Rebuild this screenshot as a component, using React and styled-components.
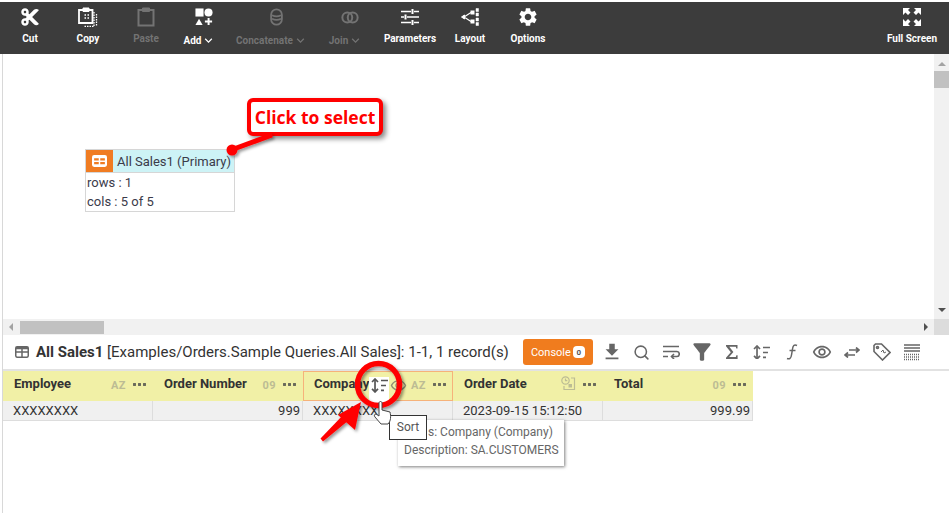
import React from 'react'
import styled, { createGlobalStyle } from 'styled-components'
import { MdSettings, MdFileDownload, MdFilterAlt, MdOutlineRemoveRedEye, MdKeyboardArrowDown } from 'react-icons/md'
import { FaCut } from 'react-icons/fa'
import { LuSearch } from 'react-icons/lu'

const Global = createGlobalStyle`
  html, body { margin: 0; padding: 0; background: #fff; }
  body { font-family: Roboto, "Liberation Sans", sans-serif; color: #333; }
`

const CopyIcon = () => (
  <svg width="20" height="20" viewBox="0 0 20 20" fill="none" stroke="currentColor">
    <path d="M5 3H1v13h13.500V3H11" strokeWidth="1.800" />
    <path d="M5 1h6v3.500H5z" fill="currentColor" strokeWidth="1" />
    <path d="M6.500 8h1.500M9.500 8h1.500M6.500 11h1.500M9.500 11h1.500" strokeWidth="1.500" />
    <path d="M16 5v14.500H6M18.500 7v12" strokeWidth="1.300" strokeDasharray="1.500 1" />
  </svg>
)
const PasteIcon = () => (
  <svg width="18" height="20" viewBox="0 0 18 20" fill="none" stroke="currentColor">
    <path d="M5 3H1.500v15.500h15V3H13" strokeWidth="2" />
    <path d="M5.500 1h7v3.500h-7z" fill="currentColor" strokeWidth="1" />
  </svg>
)
const AddIcon = () => (
  <svg width="18" height="18" viewBox="0 0 20 20" fill="currentColor">
    <rect x="0.500" y="0.500" width="9" height="9" />
    <circle cx="15" cy="5" r="4.500" />
    <path d="M0.500 19l4-7 4 7z" />
    <path d="M14 11h2.200v2.800H19v2.200h-2.800v3H14v-3h-3v-2.200h3z" />
  </svg>
)
const ConcatIcon = () => (
  <svg width="13" height="18" viewBox="0 0 14 20" fill="none" stroke="currentColor" strokeWidth="2">
    <rect x="1" y="1.500" width="12" height="17" rx="6" />
    <path d="M2 8c3 1.500 7 1.500 10 0M2 12c3 1.500 7 1.500 10 0" />
  </svg>
)
const JoinIcon = () => (
  <svg width="18" height="13" viewBox="0 0 20 14" fill="none" stroke="currentColor" strokeWidth="2.200">
    <circle cx="7" cy="7" r="5.500" />
    <circle cx="13" cy="7" r="5.500" />
  </svg>
)
const ParamsIcon = () => (
  <svg width="18" height="16" viewBox="0 0 18 16" fill="none" stroke="currentColor" strokeWidth="1.500">
    <path d="M0 2.500h10M13 2.500h5M0 8h3M6 8h12M0 13.500h10M13 13.500h5" />
    <path d="M11.500 0v5M4.500 5.500v5M11.500 11v5" strokeWidth="2" />
  </svg>
)
const LayoutIcon = () => (
  <svg width="18" height="18" viewBox="0 0 18 18" fill="currentColor" stroke="currentColor">
    <path d="M3 9L10 4.500M3 9l7 4.500" fill="none" strokeWidth="1.200" />
    <path d="M0.500 9l3-2v4z" />
    <rect x="10" y="3" width="3" height="3" />
    <rect x="10" y="12" width="3" height="3" />
    <path d="M15 0.500h2.500v3H15zM15 5h2.500v3H15zM15 10h2.500v3H15zM15 14.500h2.500v3H15z" strokeWidth="0.500" />
  </svg>
)
const FullIcon = () => (
  <svg width="18" height="18" viewBox="0 0 18 18" fill="currentColor">
    <path d="M0 0h7L5 2l2.500 2.500-2.500 2.500L2.500 4.500 0 7z" />
    <path d="M18 0h-7l2 2-2.500 2.500 2.500 2.500 2.500-2.500L18 7z" />
    <path d="M0 18h7l-2-2 2.500-2.500L5 11l-2.500 2.500L0 11z" />
    <path d="M18 18h-7l2-2-2.500-2.500L13 11l2.500 2.500L18 11z" />
  </svg>
)
const GridIcon = ({ size = 14 }) => (
  <svg width={size} height={size * 0.86} viewBox="0 0 14 12" fill="none" stroke="currentColor" strokeWidth="1.500">
    <rect x="0.750" y="0.750" width="12.500" height="10.500" rx="1.500" />
    <path d="M0.750 6h12.500M7 0.750v10.500" />
    <path d="M0.750 0.750h12.500v2.500H0.750z" fill="currentColor" stroke="none" />
  </svg>
)
const NodeGrid = () => (
  <svg width="15" height="12" viewBox="0 0 14 11">
    <rect width="14" height="11" rx="2" fill="#fff" />
    <path d="M2 3h4.300v2H2zM7.700 3H12v2H7.700zM2 6.500h4.300v2H2zM7.700 6.500H12v2H7.700z" fill="#f07c22" />
  </svg>
)
const WrapIcon = () => (
  <svg width="17" height="14" viewBox="0 0 17 14" fill="none" stroke="currentColor" strokeWidth="1.600">
    <path d="M0 1.500h16M0 6.500h14c3 0 3 5 0 5H9M0 11.500h5" />
    <path d="M11 9l-2.500 2.500L11 14" />
  </svg>
)
const SigmaIcon = () => (
  <svg width="12" height="14" viewBox="0 0 12 14" fill="currentColor">
    <path d="M0 0h11.500v3.500h-1.200L9.800 1.800H3.300L7.400 7l-4.300 5h6.700l.6-1.800h1.200V14H0v-1.200L4.800 7.200 0 1.200z" />
  </svg>
)
const SortIcon = ({ w = 17 }) => (
  <svg width={w} height={w * 0.88} viewBox="0 0 17 15" fill="none" stroke="currentColor" strokeWidth="1.700">
    <path d="M4 1.500v12" />
    <path d="M1 4l3-3 3 3M1 11l3 3 3-3" />
    <path d="M10 2.500h7M10 7.500h5M10 12.500h3" />
  </svg>
)
const FuncIcon = () => (
  <svg width="12" height="16" viewBox="0 0 12 16" fill="none" stroke="currentColor" strokeWidth="1.500">
    <path d="M11 1.500C8 0 7 2 6.500 5L5.500 11C5 14.500 3.500 15.500 1 14.500" />
    <path d="M3.500 6.500h6" />
  </svg>
)
const SwapIcon = () => (
  <svg width="16" height="11" viewBox="0 0 16 11" fill="none" stroke="currentColor" strokeWidth="1.700">
    <path d="M5 3h10M12 0.500L15 3l-3 2.500" />
    <path d="M11 8H1M4 5.500L1 8l3 2.500" />
  </svg>
)
const TagIcon = () => (
  <svg width="18" height="18" viewBox="0 0 18 18" fill="none" stroke="currentColor" strokeWidth="1.600">
    <path d="M1 2.500L2.500 1h6L17 9.500 9.500 17 1 8.500z" />
    <circle cx="4.500" cy="4.500" r="1" />
    <path d="M8 9l2-2 1 3 2-1" strokeWidth="1" />
  </svg>
)
const DensityIcon = () => (
  <svg width="16" height="17" viewBox="0 0 16 17" fill="none" stroke="currentColor">
    <path d="M0 1h16M0 4h16M0 7h16" strokeWidth="1.300" />
    <path d="M0 10.500h16M0 13h16M0 15.500h16" strokeWidth="1.300" strokeDasharray="1 1" />
  </svg>
)
const DateIcon = () => (
  <svg width="15" height="15" viewBox="0 0 15 15" fill="none" stroke="currentColor" strokeWidth="1.200">
    <circle cx="4.500" cy="4.500" r="3.700" />
    <path d="M4.500 2.500v2.200h1.800M10 2h3.500v11.500H3V10" />
    <rect x="7.500" y="8" width="3.500" height="3.500" fill="currentColor" stroke="none" />
  </svg>
)

const Page = styled.div`
  width: 949px;
  height: 513px;
  overflow: hidden;
  display: flex;
  flex-direction: column;
  padding-top: 2px;
  box-sizing: border-box;
  position: relative;
`
const Toolbar = styled.div`
  height: 52px;
  flex: none;
  background: #3c3c3c;
  display: flex;
  padding-left: 1px;
`
const Tool = styled.div`
  width: ${p => p.$w}px;
  flex: none;
  display: flex;
  flex-direction: column;
  align-items: center;
  color: ${p => (p.$off ? '#737373' : '#fff')};
  ${p => p.$end && 'margin-left: auto;'}
`
const ToolIcon = styled.div`
  height: 24px;
  margin-top: 3px;
  display: flex;
  align-items: center;
  justify-content: center;
  ${p => p.$menu && 'margin-left: 8px;'}
`
const ToolLabel = styled.div`
  font-size: 10px;
  font-weight: 700;
  line-height: 12px;
  margin-top: 4px;
  display: flex;
  align-items: center;
  white-space: nowrap;
`
const Work = styled.div`
  flex: 1;
  display: flex;
  flex-direction: column;
  margin-left: 2px;
  border-left: 1px solid #d8d8d8;
  min-height: 0;
`
const CanvasRow = styled.div`
  height: 265px;
  flex: none;
  display: flex;
`
const Canvas = styled.div`
  flex: 1;
  position: relative;
  background: #fff;
`
const VScroll = styled.div`
  width: 15px;
  background: #f1f1f1;
  display: flex;
  flex-direction: column;
  align-items: center;
`
const VThumb = styled.div`
  width: 100%;
  height: 17px;
  margin-top: 5px;
  background: #c1c1c1;
`
const ArrowUp = styled.div`
  width: 0;
  height: 0;
  margin-top: 8px;
  border: 4px solid transparent;
  border-top: 0;
  border-bottom: 4px solid #a3a3a3;
`
const ArrowDown = styled.div`
  width: 0;
  height: 0;
  margin-top: auto;
  margin-bottom: 7px;
  border: 4px solid transparent;
  border-bottom: 0;
  border-top: 4px solid #505050;
`
const HScroll = styled.div`
  height: 16px;
  flex: none;
  display: flex;
  align-items: center;
  background: #f1f1f1;
`
const HThumb = styled.div`
  width: 84px;
  height: 13px;
  margin-left: 7px;
  background: #c1c1c1;
`
const ArrowLeft = styled.div`
  width: 0;
  height: 0;
  margin-left: 6px;
  border: 4px solid transparent;
  border-left: 0;
  border-right: 4px solid #a3a3a3;
`
const ArrowRight = styled.div`
  width: 0;
  height: 0;
  margin-left: auto;
  margin-right: 6px;
  border: 4px solid transparent;
  border-right: 0;
  border-left: 4px solid #505050;
`
const HCorner = styled.div`
  width: 15px;
  height: 16px;
  background: #dcdcdc;
`
const Node = styled.div`
  position: absolute;
  left: 82px;
  top: 95px;
  width: 150px;
  border: 1px solid #d6d6d6;
  box-sizing: border-box;
  font-size: 13px;
  color: #3b3b4a;
`
const NodeHead = styled.div`
  height: 22px;
  display: flex;
  align-items: center;
  background: #cdf3f6;
  border-bottom: 1px solid #d6d6d6;
  white-space: nowrap;
`
const NodeBadge = styled.div`
  width: 27px;
  height: 22px;
  flex: none;
  background: #f07c22;
  display: flex;
  align-items: center;
  justify-content: center;
  margin-right: 4px;
`
const NodeRow = styled.div`
  height: 19px;
  line-height: 19px;
  padding-left: 1px;
`
const Callout = styled.div`
  position: absolute;
  left: 244px;
  top: 44px;
  width: 136px;
  height: 38px;
  box-sizing: border-box;
  background: #fff;
  border: 4px solid #f00;
  border-radius: 6px;
  box-shadow: 3px 3px 5px rgba(0, 0, 0, 0.45);
  color: #f00;
  font: 700 17.500px/31px "Open Sans", sans-serif;
  text-align: center;
  white-space: nowrap;
`
const Lines = styled.svg`
  position: absolute;
  left: 0;
  top: 0;
  pointer-events: none;
`
const TitleBar = styled.div`
  height: 34px;
  flex: none;
  display: flex;
  align-items: center;
  padding-left: 12px;
  border-bottom: 2px solid #e2e2e2;
  color: #666;
`
const Title = styled.div`
  margin-left: 7px;
  font-size: 15px;
  color: #333;
  white-space: nowrap;
  b { font-weight: 700; }
`
const ConsoleBtn = styled.div`
  margin-left: 14px;
  width: 70px;
  height: 26px;
  flex: none;
  border-radius: 3px;
  background: #f07c1e;
  color: #fff;
  font-size: 11px;
  display: flex;
  align-items: center;
  justify-content: center;
  gap: 2px;
`
const Count = styled.span`
  background: #fff;
  color: #555;
  font-size: 8px;
  font-weight: 700;
  width: 12px;
  height: 12px;
  border-radius: 4px;
  display: flex;
  align-items: center;
  justify-content: center;
`
const Actions = styled.div`
  display: flex;
  align-items: center;
  margin-left: 4px;
  color: #666;
`
const Action = styled.div`
  width: 30px;
  height: 24px;
  display: flex;
  align-items: center;
  justify-content: center;
`
const Table = styled.div`
  width: 750px;
  display: grid;
  grid-template-columns: repeat(5, 150px);
  grid-template-rows: 30px 20px;
`
const HeadCell = styled.div`
  background: #f1f0a6;
  display: flex;
  align-items: flex-start;
  padding: 5px 7px 0 11px;
  box-sizing: border-box;
  font-size: 13px;
  font-weight: 700;
  color: #333;
  line-height: 15px;
  ${p => p.$focus && 'outline: 1px solid #f6b27a; outline-offset: -1px;'}
`
const HeadName = styled.span`
  margin-right: auto;
`
const TypeTag = styled.span`
  font-size: 11px;
  font-weight: 700;
  color: #bcbc94;
  margin: 2px 6px 0 0;
  letter-spacing: 0.500px;
`
const TypeIcon = styled.span`
  color: #bcbc94;
  margin-right: 6px;
  display: flex;
`
const Dots = styled.span`
  width: 14px;
  height: 3px;
  margin-top: 7px;
  background: radial-gradient(circle at center, #6a6a5a 1.400px, transparent 1.600px) 0 0 / 5px 3px repeat-x;
`
const Cell = styled.div`
  background: #f0f0f0;
  border-right: 1px solid #ddd;
  border-bottom: 1px solid #ddd;
  box-sizing: border-box;
  font-size: 13px;
  line-height: 19px;
  padding: 0 2px 0 10px;
  color: #333;
  text-align: ${p => (p.$right ? 'right' : 'left')};
`
const FieldTip = styled.div`
  position: absolute;
  left: 398px;
  top: 420px;
  width: 166px;
  height: 46px;
  box-sizing: border-box;
  background: #fff;
  box-shadow: 1px 1px 3px rgba(0, 0, 0, 0.5);
  font-size: 12px;
  color: #666;
  padding: 3px 0 0 6px;
  line-height: 18px;
  white-space: nowrap;
`
const FieldName = styled.div`
  padding-left: 24px;
`
const SortTip = styled.div`
  position: absolute;
  left: 389px;
  top: 415px;
  width: 38px;
  height: 25px;
  box-sizing: border-box;
  background: #fff;
  border: 1px solid #333;
  font-size: 12px;
  color: #555;
  line-height: 22px;
  text-align: center;
`
const SortHighlight = styled.div`
  position: absolute;
  left: 369px;
  top: 377px;
  width: 20px;
  height: 25px;
  padding-top: 1px;
  box-sizing: border-box;
  background: #fff;
  color: #555;
  display: flex;
  align-items: flex-start;
  justify-content: center;
`
const HideIcon = styled.div`
  position: absolute;
  left: 390px;
  top: 377px;
  color: #8f8f75;
  display: flex;
`

const tools = [
  { w: 58, label: 'Cut', icon: <FaCut size={20} /> },
  { w: 58, label: 'Copy', icon: <CopyIcon /> },
  { w: 58, label: 'Paste', icon: <PasteIcon />, off: true },
  { w: 50, label: 'Add', icon: <AddIcon />, menu: true },
  { w: 94, label: 'Concatenate', icon: <ConcatIcon />, off: true, menu: true },
  { w: 54, label: 'Join', icon: <JoinIcon />, off: true, menu: true },
  { w: 74, label: 'Parameters', icon: <ParamsIcon /> },
  { w: 46, label: 'Layout', icon: <LayoutIcon /> },
  { w: 70, label: 'Options', icon: <MdSettings size={22} /> },
]

const columns = [
  { name: 'Employee', tag: 'AZ', value: 'XXXXXXXX' },
  { name: 'Order Number', tag: '09', value: '999', right: true },
  { name: 'Company', tag: 'AZ', value: 'XXXXXXXX', focus: true },
  { name: 'Order Date', date: true, value: '2023-09-15 15:12:50' },
  { name: 'Total', tag: '09', value: '999.99', right: true },
]

const actions = [
  <MdFileDownload size={22} />,
  <LuSearch size={17} strokeWidth={2.2} />,
  <WrapIcon />,
  <MdFilterAlt size={26} />,
  <SigmaIcon />,
  <SortIcon />,
  <FuncIcon />,
  <MdOutlineRemoveRedEye size={20} />,
  <SwapIcon />,
  <TagIcon />,
  <DensityIcon />,
]

export default function App() {
  return (
    <Page>
      <Global />
      <Toolbar>
        {tools.map(t => (
          <Tool key={t.label} $w={t.w} $off={t.off}>
            <ToolIcon $menu={t.menu}>{t.icon}</ToolIcon>
            <ToolLabel>
              {t.label}
              {t.menu && <MdKeyboardArrowDown size={15} />}
            </ToolLabel>
          </Tool>
        ))}
        <Tool $w={74} $end>
          <ToolIcon><FullIcon /></ToolIcon>
          <ToolLabel>Full Screen</ToolLabel>
        </Tool>
      </Toolbar>
      <Work>
        <CanvasRow>
          <Canvas>
            <Node>
              <NodeHead>
                <NodeBadge><NodeGrid /></NodeBadge>
                All Sales1 (Primary)
              </NodeHead>
              <NodeRow>rows : 1</NodeRow>
              <NodeRow>cols : 5 of 5</NodeRow>
            </Node>
            <Callout>Click to select</Callout>
          </Canvas>
          <VScroll>
            <ArrowUp />
            <VThumb />
            <ArrowDown />
          </VScroll>
        </CanvasRow>
        <HScroll>
          <ArrowLeft />
          <HThumb />
          <ArrowRight />
          <HCorner />
        </HScroll>
        <TitleBar>
          <GridIcon />
          <Title><b>All Sales1</b> [Examples/Orders.Sample Queries.All Sales]: 1-1, 1 record(s)</Title>
          <ConsoleBtn>Console<Count>0</Count></ConsoleBtn>
          <Actions>
            {actions.map((icon, i) => <Action key={i}>{icon}</Action>)}
          </Actions>
        </TitleBar>
        <Table>
          {columns.map(c => (
            <HeadCell key={c.name} $focus={c.focus}>
              <HeadName>{c.name}</HeadName>
              {c.tag && <TypeTag>{c.tag}</TypeTag>}
              {c.date && <TypeIcon><DateIcon /></TypeIcon>}
              <Dots />
            </HeadCell>
          ))}
          {columns.map(c => (
            <Cell key={c.name} $right={c.right}>{c.value}</Cell>
          ))}
        </Table>
      </Work>
      <SortHighlight><SortIcon /></SortHighlight>
      <HideIcon><MdOutlineRemoveRedEye size={17} /></HideIcon>
      <FieldTip>
        <FieldName>s: Company (Company)</FieldName>
        <div>Description: SA.CUSTOMERS</div>
      </FieldTip>
      <SortTip>Sort</SortTip>
      <Lines width="949" height="513" viewBox="0 0 949 513" fill="none">
        <defs>
          <filter id="sh" x="-20%" y="-20%" width="150%" height="150%">
            <feDropShadow dx="2" dy="2" stdDeviation="1.500" floodOpacity="0.4" />
          </filter>
        </defs>
        <g filter="url(#sh)">
          <path d="M231 150L272 135" stroke="#f00" strokeWidth="5" />
          <circle cx="232" cy="150" r="5.500" fill="#f00" />
          <circle cx="378.500" cy="384.500" r="21" stroke="#f00" strokeWidth="5.500" />
          <path d="M320.500 438.500L323 441.500L349 420L344 414z" fill="#f00" />
          <path d="M361 402L338 415L355 430z" fill="#f00" />
        </g>
        <path
          d="M379 403v13l-3-2c-2 0-2 2-1 3l6 7h7c3-3 3-8 2-12l-8-2v-7c0-2-3-2-3 0z"
          fill="#fff"
          stroke="#444"
        />
      </Lines>
    </Page>
  )
}
